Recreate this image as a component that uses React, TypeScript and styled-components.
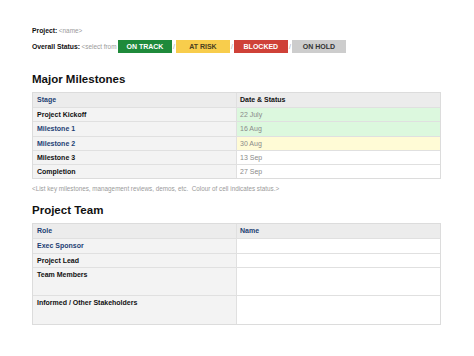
import React from 'react';
import styled, { createGlobalStyle } from 'styled-components';

const GlobalStyle = createGlobalStyle`
  body {
    margin: 0;
    background: #ffffff;
    font-family: "Liberation Sans", Arial, sans-serif;
    color: #111;
  }
`;

type Tone = 'green' | 'yellow' | 'red' | 'grey';

const badgeColors: Record<Tone, { bg: string; fg: string }> = {
  green: { bg: '#1f8a3b', fg: '#ffffff' },
  yellow: { bg: '#f8cd4c', fg: '#4a4020' },
  red: { bg: '#cf4138', fg: '#ffffff' },
  grey: { bg: '#cdcdcd', fg: '#333333' },
};

const milestones = [
  { stage: 'Project Kickoff', date: '22 July', status: 'green', blue: false },
  { stage: 'Milestone 1', date: '16 Aug', status: 'green', blue: true },
  { stage: 'Milestone 2', date: '30 Aug', status: 'yellow', blue: true },
  { stage: 'Milestone 3', date: '13 Sep', status: 'none', blue: false },
  { stage: 'Completion', date: '27 Sep', status: 'none', blue: false },
];

const team = [
  { role: 'Exec Sponsor', blue: true, tall: false },
  { role: 'Project Lead', blue: false, tall: false },
  { role: 'Team Members', blue: false, tall: true },
  { role: 'Informed / Other Stakeholders', blue: false, tall: true },
];

export default function App() {
  return (<>
    <GlobalStyle />
    <Page>
      <InfoLine>
        <Label>Project:</Label>
        <Hint>&lt;name&gt;</Hint>
      </InfoLine>
      <StatusLine>
        <Label>Overall Status:</Label>
        <Hint>&lt;select from</Hint>
        <Badge tone='green'>ON TRACK</Badge>
        <Slash>/</Slash>
        <Badge tone='yellow'>AT RISK</Badge>
        <Slash>/</Slash>
        <Badge tone='red'>BLOCKED</Badge>
        <Slash>/</Slash>
        <Badge tone='grey'>ON HOLD</Badge>
      </StatusLine>

      <Heading $gap={20}>Major Milestones</Heading>
      <Table>
        <Row>
          <KeyCell $header $blue>Stage</KeyCell>
          <ValueCell $header>Date &amp; Status</ValueCell>
        </Row>
        {milestones.map(m => (
          <Row key={m.stage}>
            <KeyCell $blue={m.blue}>{m.stage}</KeyCell>
            <ValueCell $status={m.status}>{m.date}</ValueCell>
          </Row>
        ))}
      </Table>
      <Note>&lt;List key milestones, management reviews, demos, etc.&nbsp; Colour of cell indicates status.&gt;</Note>

      <Heading $gap={12}>Project Team</Heading>
      <Table>
        <Row>
          <KeyCell $header $blue>Role</KeyCell>
          <ValueCell $header $blue>Name</ValueCell>
        </Row>
        {team.map(t => (
          <Row key={t.role} $tall={t.tall}>
            <KeyCell $blue={t.blue}>{t.role}</KeyCell>
            <ValueCell />
          </Row>
        ))}
      </Table>
    </Page>
  </>);
}

const Page = styled.main`
  width: 474px;
  height: 356px;
  box-sizing: border-box;
  padding: 24px 0 0 32px;
  overflow: hidden;
`;

const InfoLine = styled.div`
  display: flex;
  align-items: center;
  gap: 1.5px;
  height: 12px;
  font-size: 7px;
`;

const StatusLine = styled(InfoLine)`
  margin-top: 4px;
  height: 13px;
`;

const Label = styled.span`
  font-weight: bold;
  font-size: 6.8px;
  color: #111;
`;

const Hint = styled.span`
  color: #9a9a9a;
  font-size: 6.4px;
`;

const Badge = styled.span<{ tone: Tone }>`
  display: flex;
  align-items: center;
  justify-content: center;
  width: 54px;
  height: 13px;
  background: ${p => badgeColors[p.tone].bg};
  color: ${p => badgeColors[p.tone].fg};
  font-weight: bold;
  font-size: 7px;
`;

const Slash = styled.span`
  color: #aaa;
  font-size: 7px;
  margin: 0 -0.5px;
`;

const Heading = styled.h2<{ $gap: number }>`
  margin: ${p => p.$gap}px 0 6px 0;
  font-size: 11.5px;
  font-weight: bold;
  color: #111;
  line-height: 13px;
`;

const Table = styled.div`
  width: 407px;
  border: 1px solid #dcdcdc;
  display: flex;
  flex-direction: column;
`;

const Row = styled.div<{ $tall?: boolean }>`
  display: grid;
  grid-template-columns: 204px 1fr;
  box-sizing: border-box;
  height: ${p => (p.$tall ? '28.5px' : '14.2px')};
  border-top: 1px solid #e0e0e0;
  &:first-child {
    border-top: none;
  }
`;

const statusBg: Record<string, string> = {
  green: '#dcf8de',
  yellow: '#fffbd6',
  none: '#ffffff',
};

const KeyCell = styled.div<{ $header?: boolean; $blue?: boolean }>`
  display: flex;
  align-items: flex-start;
  padding: 3px 0 0 4px;
  font-size: 7px;
  line-height: 8px;
  font-weight: bold;
  color: ${p => (p.$blue ? '#1d3f73' : '#111')};
  background: ${p => (p.$header ? '#ececec' : '#f3f3f3')};
  border-right: 1px solid #e0e0e0;
`;

const ValueCell = styled.div<{ $header?: boolean; $blue?: boolean; $status?: string }>`
  display: flex;
  align-items: flex-start;
  padding: 3px 0 0 3px;
  font-size: 7px;
  line-height: 8px;
  font-weight: ${p => (p.$header ? 'bold' : 'normal')};
  color: ${p => (p.$header ? (p.$blue ? '#1d3f73' : '#111') : '#8a8a8a')};
  background: ${p => (p.$header ? '#ececec' : statusBg[p.$status || 'none'])};
`;

const Note = styled.p`
  margin: 6px 0 0 0;
  font-size: 6.3px;
  color: #9a9a9a;
`;
